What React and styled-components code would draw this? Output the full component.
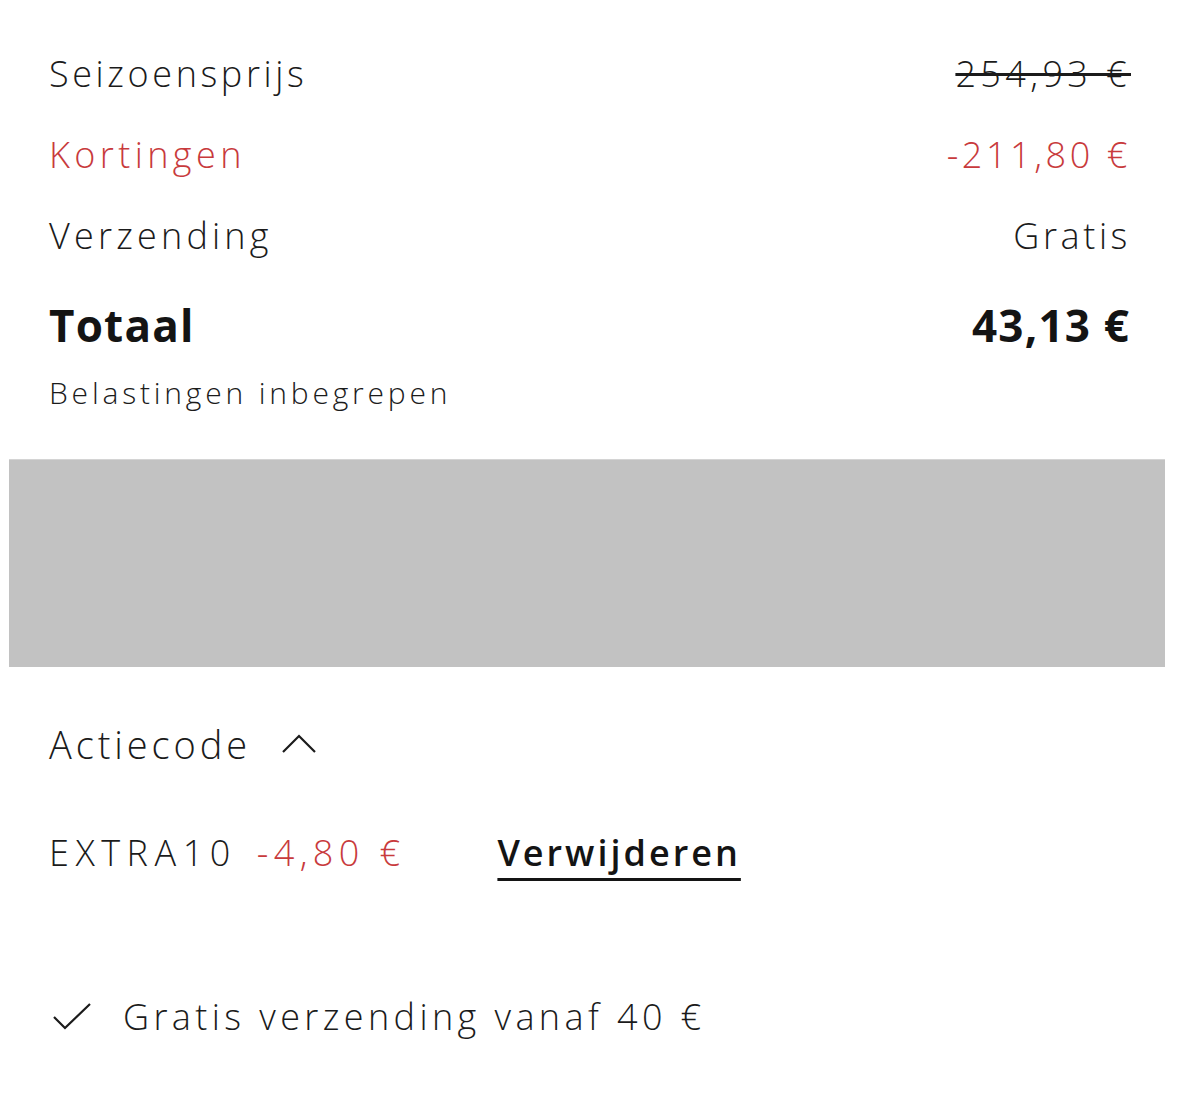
import styled, { createGlobalStyle } from "styled-components";

const GlobalStyle = createGlobalStyle`
  body {
    margin: 0;
    background: #ffffff;
    font-family: "Open Sans", Lato, sans-serif;
    color: #1b1b1b;
  }
`;

const Page = styled.div`
  width: 1179px;
  padding-top: 33px;
`;

const Summary = styled.div`
  padding: 0 50px 0 49px;
  display: flex;
  flex-direction: column;
`;

const Row = styled.div`
  display: flex;
  justify-content: space-between;
  align-items: baseline;
  height: 81px;
  line-height: 81px;
  font-size: 36px;
  font-weight: 300;
  letter-spacing: 3.6px;
  color: ${(p) => (p.$red ? "#c83a3c" : "#1b1b1b")};
`;

const Label = styled.span`
  letter-spacing: ${(p) => p.$spacing || "3.6px"};
`;

const Value = styled.span`
  margin-right: -2px;
`;

const OldPrice = styled(Value)`
  letter-spacing: 4.4px;
  text-decoration: line-through;
  text-decoration-thickness: 3px;
`;

const TotalRow = styled.div`
  display: flex;
  justify-content: space-between;
  align-items: baseline;
  margin-top: 19px;
  height: 60px;
  line-height: 60px;
  font-size: 44px;
  font-weight: 700;
  letter-spacing: 1.2px;
  color: #141414;
`;

const TotalValue = styled.span`
  margin-right: -1.2px;
`;

const TaxNote = styled.div`
  margin-top: 18px;
  line-height: 40px;
  font-size: 30px;
  font-weight: 300;
  letter-spacing: 3.8px;
`;

const Banner = styled.div`
  margin: 46px 14px 0 9px;
  height: 207px;
  background: #c2c2c2;
  border-top: 1px solid #d4d4d4;
`;

const Promo = styled.div`
  padding: 0 50px 0 49px;
  display: flex;
  flex-direction: column;
`;

const PromoHeader = styled.div`
  margin-top: 52px;
  display: flex;
  align-items: center;
  gap: 30px;
  line-height: 50px;
  font-size: 38px;
  font-weight: 300;
  letter-spacing: 3.9px;
`;

const CodeRow = styled.div`
  margin-top: 59px;
  display: flex;
  align-items: baseline;
  line-height: 50px;
  font-size: 36px;
  font-weight: 300;
  letter-spacing: 5.4px;
`;

const Code = styled.span`
  letter-spacing: 6.5px;
  margin-right: 20px;
`;

const CodeAmount = styled.span`
  color: #c83a3c;
  margin-right: 92px;
`;

const RemoveLink = styled.a`
  font-weight: 600;
  color: #141414;
  letter-spacing: 3px;
  text-decoration: underline;
  text-decoration-thickness: 3px;
  text-underline-offset: 12px;
  cursor: pointer;
`;

const Perk = styled.div`
  margin-top: 114px;
  display: flex;
  align-items: center;
  gap: 32px;
  padding-left: 4px;
  line-height: 50px;
  font-size: 36px;
  font-weight: 300;
  letter-spacing: 4.4px;
`;

const Chevron = () => (
  <svg width="36" height="20" viewBox="0 0 36 20" fill="none">
    <path d="M2 18 L18 2 L34 18" stroke="#1b1b1b" strokeWidth="2.2" />
  </svg>
);

const Check = () => (
  <svg width="38" height="28" viewBox="0 0 38 28" fill="none">
    <path d="M1 14 L12 25 L37 1" stroke="#1b1b1b" strokeWidth="2.2" />
  </svg>
);

export default function App() {
  return (
    <Page>
      <GlobalStyle />
      <Summary>
        <Row>
          <Label>Seizoensprijs</Label>
          <OldPrice>254,93 €</OldPrice>
        </Row>
        <Row $red>
          <Label $spacing="4.4px">Kortingen</Label>
          <Value>-211,80 €</Value>
        </Row>
        <Row>
          <Label $spacing="4.2px">Verzending</Label>
          <Value>Gratis</Value>
        </Row>
        <TotalRow>
          <span>Totaal</span>
          <TotalValue>43,13 €</TotalValue>
        </TotalRow>
        <TaxNote>Belastingen inbegrepen</TaxNote>
      </Summary>
      <Banner />
      <Promo>
        <PromoHeader>
          <span>Actiecode</span>
          <Chevron />
        </PromoHeader>
        <CodeRow>
          <Code>EXTRA10</Code>
          <CodeAmount>-4,80 €</CodeAmount>
          <RemoveLink>Verwijderen</RemoveLink>
        </CodeRow>
        <Perk>
          <Check />
          <span>Gratis verzending vanaf 40 €</span>
        </Perk>
      </Promo>
    </Page>
  );
}
